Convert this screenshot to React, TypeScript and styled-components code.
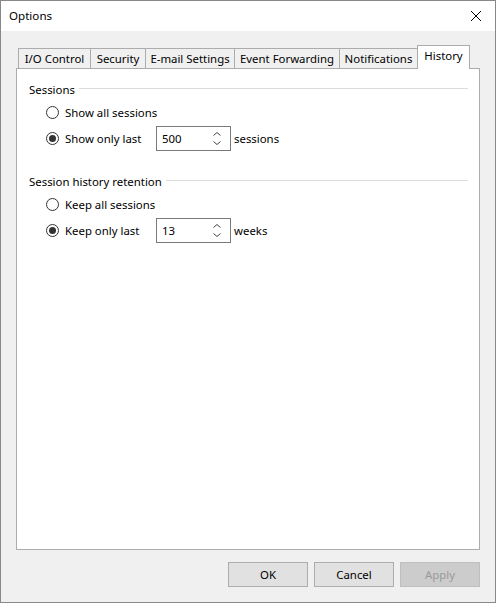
import React from 'react';
import styled, { createGlobalStyle } from 'styled-components';

const GlobalStyle = createGlobalStyle`
  html, body {
    margin: 0;
    padding: 0;
    background: #ffffff;
  }
  body {
    font-family: "Noto Sans", "Segoe UI", sans-serif;
    font-size: 11.4px;
    color: #000;
  }
`;

const Window = styled.div`
  width: 496px;
  height: 603px;
  box-sizing: border-box;
  border: 1px solid #888888;
  display: flex;
  flex-direction: column;
  background: #f0f0f0;
`;

const TitleBar = styled.div`
  height: 30px;
  flex: none;
  background: #ffffff;
  display: flex;
  align-items: center;
  justify-content: space-between;
  padding: 0 8px 1px 8px;
  box-sizing: border-box;
`;

const Title = styled.span`
  font-size: 11.6px;
`;

const CloseButton = styled.div`
  width: 20px;
  height: 20px;
  display: flex;
  align-items: center;
  justify-content: center;
  margin-right: 1px;
`;

const Body = styled.div`
  flex: 1;
  display: flex;
  flex-direction: column;
  padding: 14px 15px 15px 15px;
`;

const TabStrip = styled.div`
  display: flex;
  align-items: flex-end;
  height: 23px;
  padding-left: 2px;
  position: relative;
  z-index: 1;
`;

const Tab = styled.div<{ $w: number; $active?: boolean }>`
  width: ${({ $w }) => $w}px;
  box-sizing: border-box;
  height: ${({ $active }) => ($active ? 24 : 20)}px;
  margin-bottom: ${({ $active }) => ($active ? -1 : 0)}px;
  margin-left: -1px;
  &:first-child {
    margin-left: 0;
  }
  border: 1px solid #acacac;
  border-bottom: none;
  background: ${({ $active }) => ($active ? '#ffffff' : '#f0f0f0')};
  display: flex;
  align-items: ${({ $active }) => ($active ? 'flex-start' : 'center')};
  padding-top: ${({ $active }) => ($active ? 2 : 0)}px;
  justify-content: center;
  white-space: nowrap;
  position: relative;
  z-index: ${({ $active }) => ($active ? 2 : 1)};
`;

const Panel = styled.div`
  height: 482px;
  box-sizing: border-box;
  border: 1px solid #acacac;
  background: #ffffff;
  padding: 12px 11px 0 12px;
  display: flex;
  flex-direction: column;
`;

const Group = styled.div<{ $gap?: number }>`
  display: flex;
  flex-direction: column;
  margin-top: ${({ $gap }) => $gap ?? 0}px;
`;

const GroupHeader = styled.div`
  height: 16px;
  display: flex;
  align-items: center;
  gap: 4px;
  &::after {
    content: '';
    flex: 1;
    height: 1px;
    background: #dcdcdc;
    margin-top: -1px;
  }
`;

const OptionRow = styled.div<{ $h: number; $top: number }>`
  height: ${({ $h }) => $h}px;
  margin-top: ${({ $top }) => $top}px;
  padding-left: 17px;
  display: flex;
  align-items: center;
`;

const RadioLabel = styled.label<{ $w?: number }>`
  display: flex;
  align-items: center;
  gap: 6px;
  width: ${({ $w }) => ($w ? `${$w}px` : 'auto')};
  margin-top: -1px;
`;

const RadioCircle = styled.span<{ $checked?: boolean }>`
  width: 13px;
  height: 13px;
  box-sizing: border-box;
  border: 1px solid #333333;
  border-radius: 50%;
  background: #ffffff;
  display: flex;
  align-items: center;
  justify-content: center;
  &::after {
    content: '';
    width: 7px;
    height: 7px;
    border-radius: 50%;
    background: ${({ $checked }) => ($checked ? '#333333' : 'transparent')};
  }
`;

const SpinBox = styled.div`
  width: 75px;
  height: 25px;
  box-sizing: border-box;
  border: 1px solid #7a7a7a;
  background: #ffffff;
  display: flex;
  align-items: center;
  padding-left: 5px;
`;

const SpinValue = styled.span`
  flex: 1;
`;

const SpinArrows = styled.div`
  width: 20px;
  display: flex;
  flex-direction: column;
  align-items: center;
  gap: 5px;
  margin-right: 3px;
`;

const Unit = styled.span`
  margin-left: 3px;
`;

const ButtonBar = styled.div`
  margin-top: 12px;
  display: flex;
  justify-content: flex-end;
  gap: 6px;
`;

const Button = styled.div<{ $disabled?: boolean }>`
  width: 80px;
  height: 25px;
  box-sizing: border-box;
  border: 1px solid ${({ $disabled }) => ($disabled ? '#bfbfbf' : '#adadad')};
  background: ${({ $disabled }) => ($disabled ? '#cccccc' : '#e1e1e1')};
  color: ${({ $disabled }) => ($disabled ? '#9a9a9a' : '#000000')};
  display: flex;
  align-items: center;
  justify-content: center;
`;

const Chevron = ({ up }: { up?: boolean }) => (
  <svg width="8" height="4" viewBox="0 0 8 4">
    <path
      d={up ? 'M0.5 3.5 L4 0.5 L7.5 3.5' : 'M0.5 0.5 L4 3.5 L7.5 0.5'}
      fill="none"
      stroke="#444"
      strokeWidth="1"
    />
  </svg>
);

const Spinner = ({ value }: { value: string }) => (
  <SpinBox>
    <SpinValue>{value}</SpinValue>
    <SpinArrows>
      <Chevron up />
      <Chevron />
    </SpinArrows>
  </SpinBox>
);

const tabs = [
  { label: 'I/O Control', w: 73 },
  { label: 'Security', w: 56 },
  { label: 'E-mail Settings', w: 90 },
  { label: 'Event Forwarding', w: 106 },
  { label: 'Notifications', w: 79 },
  { label: 'History', w: 53, active: true },
];

export default function App() {
  return (
    <>
      <GlobalStyle />
      <Window>
        <TitleBar>
          <Title>Options</Title>
          <CloseButton>
            <svg width="10" height="10" viewBox="0 0 10 10">
              <path d="M0 0 L10 10 M10 0 L0 10" stroke="#000" strokeWidth="1" />
            </svg>
          </CloseButton>
        </TitleBar>
        <Body>
          <TabStrip>
            {tabs.map((t) => (
              <Tab key={t.label} $w={t.w} $active={t.active}>
                {t.label}
              </Tab>
            ))}
          </TabStrip>
          <Panel>
            <Group>
              <GroupHeader>Sessions</GroupHeader>
              <OptionRow $h={20} $top={6}>
                <RadioLabel>
                  <RadioCircle />
                  Show all sessions
                </RadioLabel>
              </OptionRow>
              <OptionRow $h={25} $top={3}>
                <RadioLabel $w={110}>
                  <RadioCircle $checked />
                  Show only last
                </RadioLabel>
                <Spinner value="500" />
                <Unit>sessions</Unit>
              </OptionRow>
            </Group>
            <Group $gap={22}>
              <GroupHeader>Session history retention</GroupHeader>
              <OptionRow $h={20} $top={6}>
                <RadioLabel>
                  <RadioCircle />
                  Keep all sessions
                </RadioLabel>
              </OptionRow>
              <OptionRow $h={25} $top={3}>
                <RadioLabel $w={110}>
                  <RadioCircle $checked />
                  Keep only last
                </RadioLabel>
                <Spinner value="13" />
                <Unit>weeks</Unit>
              </OptionRow>
            </Group>
          </Panel>
          <ButtonBar>
            <Button>OK</Button>
            <Button>Cancel</Button>
            <Button $disabled>Apply</Button>
          </ButtonBar>
        </Body>
      </Window>
    </>
  );
}
